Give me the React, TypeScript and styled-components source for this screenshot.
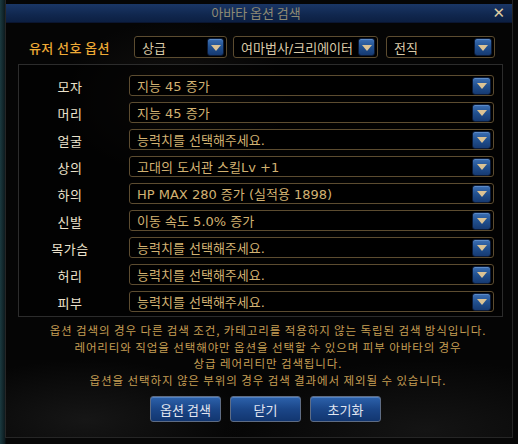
import * as React from 'react';
import styled, { createGlobalStyle } from 'styled-components';

const GlobalStyle = createGlobalStyle`
  html, body {
    margin: 0;
    padding: 0;
    background: #0a1418;
  }
  body {
    width: 518px;
    height: 444px;
    overflow: hidden;
    font-family: "Noto Sans CJK KR", "Noto Sans", sans-serif;
    background: linear-gradient(90deg, #1b3a40 0px, #0c1a1e 5px, #070707 6px);
  }
`;

const Stage = styled.div`
  width: 518px;
  height: 444px;
  padding: 0 5px;
  box-sizing: border-box;
`;

const Window = styled.div`
  width: 508px;
  height: 438px;
  box-sizing: border-box;
  border: 1px solid #262626;
  border-top: none;
  background:
    radial-gradient(ellipse 160px 60px at 80px 420px, #161616 0%, rgba(0,0,0,0) 100%),
    radial-gradient(ellipse 200px 70px at 420px 430px, #141414 0%, rgba(0,0,0,0) 100%),
    radial-gradient(ellipse 120px 80px at 170px 100px, #141210 0%, rgba(0,0,0,0) 100%),
    #050505;
  padding-top: 4px;
  display: flex;
  flex-direction: column;
`;

const TitleBar = styled.div`
  height: 18px;
  display: grid;
  grid-template-columns: 1fr auto 1fr;
  align-items: center;
  background: linear-gradient(#1a3666, #10274e 60%, #0c1f42);
  border-bottom: 1px solid #0a1530;
`;

const Title = styled.div`
  grid-column: 2;
  color: #8e8a74;
  font-size: 13px;
  line-height: 18px;
  padding-right: 6px;
`;

const Close = styled.div`
  grid-column: 3;
  justify-self: end;
  margin-right: 7px;
  color: #dccaa0;
  font-family: "DejaVu Sans", sans-serif;
  font-weight: bold;
  font-size: 15px;
  line-height: 18px;
`;

const Body = styled.div`
  padding: 13px 9px 0 11px;
  display: flex;
  flex-direction: column;
`;

const TopRow = styled.div`
  display: flex;
  align-items: center;
  height: 22px;
  padding-left: 12px;
`;

const PrefLabel = styled.div`
  color: #eeaa36;
  font-size: 13px;
  font-weight: 500;
  width: 105px;
  letter-spacing: 0.4px;
`;

const Select = styled.div<{ $w?: number; $gap?: number; $light?: boolean }>`
  ${p => (p.$w ? `width: ${p.$w}px;` : 'flex: 1;')}
  margin-left: ${p => p.$gap || 0}px;
  height: 22px;
  box-sizing: border-box;
  border: 1px solid #5c4c30;
  border-radius: 3px;
  background: #000;
  display: flex;
  align-items: center;
  justify-content: space-between;
  padding: 0 2px 0 7px;
  color: ${p => (p.$light ? '#dacaa8' : '#d2b272')};
  font-family: "DejaVu Sans", "Noto Sans CJK KR", sans-serif;
  font-size: 13px;
  white-space: nowrap;
`;

const ArrowBtn = styled.span<{ $w?: number }>`
  width: ${p => p.$w || 19}px;
  height: 18px;
  box-sizing: border-box;
  border: 1px solid #0b1a36;
  border-radius: 3px;
  background: linear-gradient(#3d70b4, #21508f 50%, #163a72);
  box-shadow: inset 0 1px 0 rgba(140, 180, 230, 0.4);
  display: flex;
  align-items: center;
  justify-content: center;
  &::after {
    content: '';
    border-left: 5px solid transparent;
    border-right: 5px solid transparent;
    border-top: 6px solid #dcc394;
    margin-top: 1px;
  }
`;

const Panel = styled.div`
  margin-top: 6px;
  margin-left: 1px;
  border: 1px solid #2c2c2c;
  padding: 10px 8px 4px 0;
  display: flex;
  flex-direction: column;
  gap: 6px;
  background: rgba(0, 0, 0, 0.55);
`;

const Row = styled.div`
  display: grid;
  grid-template-columns: 102px 1fr;
  column-gap: 8px;
  align-items: center;
  height: 21px;
`;

const PartLabel = styled.div`
  text-align: center;
  color: #ece2cc;
  font-size: 13px;
  letter-spacing: 0.6px;
  padding-top: 2px;
`;

const RowSelect = styled(Select)`
  height: 21px;
`;

const Notice = styled.div`
  margin-top: 5px;
  padding-left: 16px;
  text-align: center;
  color: #c69e54;
  font-size: 11.5px;
  line-height: 16.6px;
  letter-spacing: 0.9px;
  white-space: nowrap;
`;

const Buttons = styled.div`
  margin-top: 8px;
  padding-left: 11px;
  display: flex;
  justify-content: center;
  gap: 9px;
`;

const Button = styled.div`
  width: 71px;
  height: 26px;
  box-sizing: border-box;
  border: 1px solid #5e6c84;
  border-radius: 3px;
  background: linear-gradient(#2d62ac, #1b4688 50%, #123670);
  box-shadow: inset 0 1px 0 rgba(150, 190, 240, 0.35);
  color: #e2e6f0;
  font-size: 13px;
  display: flex;
  align-items: center;
  justify-content: center;
`;

const parts: [string, string][] = [
  ['모자', '지능 45 증가'],
  ['머리', '지능 45 증가'],
  ['얼굴', '능력치를 선택해주세요.'],
  ['상의', '고대의 도서관 스킬Lv +1'],
  ['하의', 'HP MAX 280 증가 (실적용 1898)'],
  ['신발', '이동 속도 5.0% 증가'],
  ['목가슴', '능력치를 선택해주세요.'],
  ['허리', '능력치를 선택해주세요.'],
  ['피부', '능력치를 선택해주세요.'],
];

export default function App() {
  return (
    <>
      <GlobalStyle />
      <Stage>
        <Window>
          <TitleBar>
            <Title>아바타 옵션 검색</Title>
            <Close>✕</Close>
          </TitleBar>
          <Body>
            <TopRow>
              <PrefLabel>유저 선호 옵션</PrefLabel>
              <Select $w={93} $light>
                상급
                <ArrowBtn $w={17} />
              </Select>
              <Select $w={145} $gap={6} $light>
                여마법사/크리에이터
                <ArrowBtn $w={17} />
              </Select>
              <Select $w={109} $gap={8} $light>
                전직
                <ArrowBtn $w={18} />
              </Select>
            </TopRow>
            <Panel>
              {parts.map(([label, value]) => (
                <Row key={label}>
                  <PartLabel>{label}</PartLabel>
                  <RowSelect>
                    {value}
                    <ArrowBtn />
                  </RowSelect>
                </Row>
              ))}
            </Panel>
            <Notice>
              옵션 검색의 경우 다른 검색 조건, 카테고리를 적용하지 않는 독립된 검색 방식입니다.
              <br />
              레어리티와 직업을 선택해야만 옵션을 선택할 수 있으며 피부 아바타의 경우
              <br />
              상급 레어리티만 검색됩니다.
              <br />
              옵션을 선택하지 않은 부위의 경우 검색 결과에서 제외될 수 있습니다.
            </Notice>
            <Buttons>
              <Button>옵션 검색</Button>
              <Button>닫기</Button>
              <Button>초기화</Button>
            </Buttons>
          </Body>
        </Window>
      </Stage>
    </>
  );
}
